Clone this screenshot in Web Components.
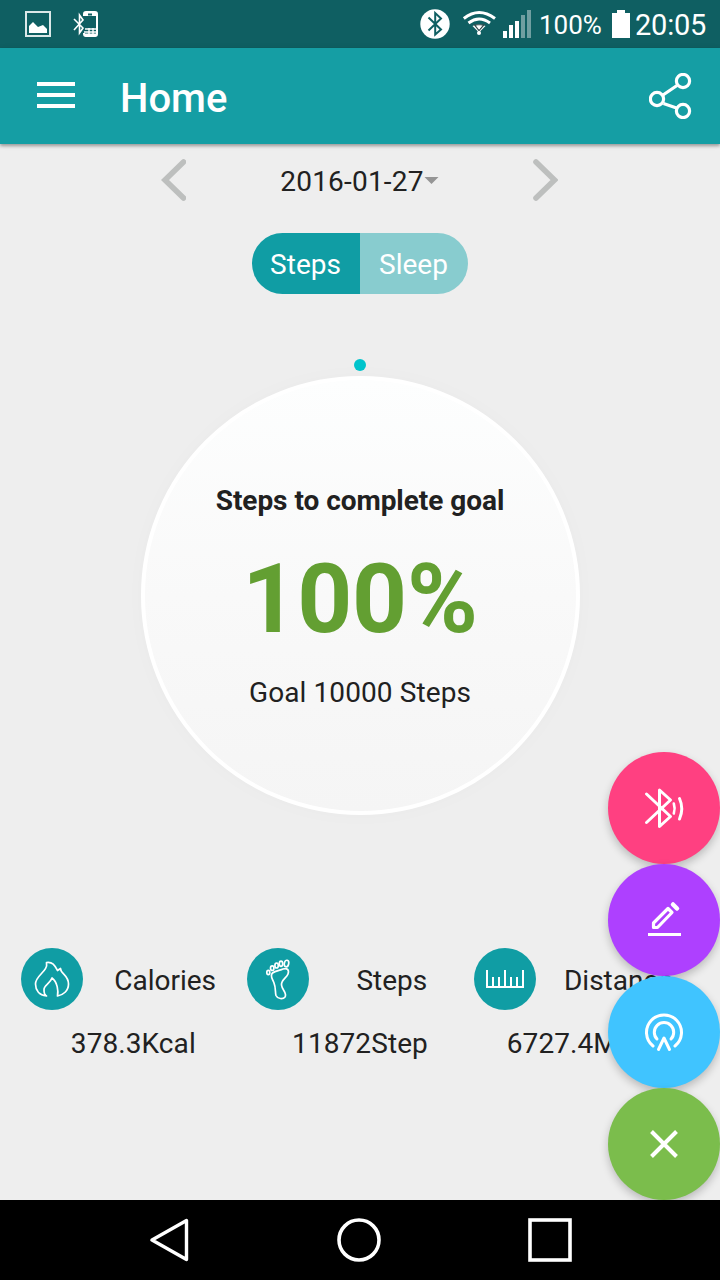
<!DOCTYPE html>
<html lang="en">
<head>
<meta charset="utf-8">
<title>Home</title>
<style>
	body {
		margin: 0;
		background: #eee;
	}
</style>
</head>
<body>
<fit-app></fit-app>
<script>
class BaseElement extends HTMLElement {
	constructor() {
		super();
		const template = document.createElement('template');
		template.innerHTML = this.constructor.html;
		this.attachShadow({mode: 'open'});
		this.shadowRoot.appendChild(template.content.cloneNode(true));
	}
}

class StatusBar extends BaseElement {
	static html = `
<style>
	:host {
		display: flex;
		justify-content: space-between;
		height: 48px;
		box-sizing: border-box;
		padding: 0 14px 0 25px;
		background: #0f5f62;
		color: #fff;
	}
	.group {
		display: flex;
		align-items: center;
	}
	svg {
		display: block;
	}
	.left {
		gap: 22px;
	}
	.percent {
		font-size: 26px;
		line-height: 48px;
		margin: 2px 0 0 7px;
		width: 73px;
	}
	.clock {
		font-size: 29px;
		line-height: 48px;
		margin: 2px 0 0 5px;
		width: 71px;
		letter-spacing: -.2px;
	}
</style>
<div class="group left">
	<svg width="26" height="26" viewBox="0 0 26 26">
		<rect x="1" y="1" width="24" height="24" fill="none" stroke="#dbe8e8" stroke-width="2"/>
		<path d="M4 22V15L8 11L13 16L18 14L22 18V22Z" fill="#fff"/>
	</svg>
	<svg width="26" height="26" viewBox="0 0 26 26" fill="none" stroke="#fff">
		<path d="M1 8L10 17L6.500 22V4L10 9L1 19" stroke-width="1.600"/>
		<path d="M11 5V3Q11 1 13 1H22Q24 1 24 3V23Q24 25 22 25H13Q11 25 11 23V22" stroke-width="2"/>
		<path d="M11 3.500H24" stroke-width="3"/>
		<path d="M15 3.500H19" stroke="#0f5f62" stroke-width="2"/>
		<path d="M12 18H24M11 21H24M16 17V24M20 17V24" stroke-width="1.400"/>
		<path d="M12 24H23" stroke-width="3"/>
	</svg>
</div>
<div class="group right">
	<svg width="112" height="48" viewBox="420 0 112 48">
		<circle cx="435" cy="24" r="14.700" fill="#fff"/>
		<path d="M428.500 17.500L441 29.500L435.200 34.500V13L441 18.500L428.500 30.500" fill="none" stroke="#0f5f62" stroke-width="2"/>
		<g fill="none" stroke="#fff" stroke-width="3">
			<path d="M463.800 18.500Q479 6.500 495 18.500"/>
			<path d="M468.500 23Q479 15 490 23"/>
		</g>
		<path d="M472.500 26Q479 22.500 485.500 26L479 32.500Z" fill="#fff"/>
		<path d="M474.500 24.800H484L479 30.500Z" fill="none" stroke="#334c4f" stroke-width="1.200"/>
		<path d="M477 25.500H481.500L479.500 29.500Z" fill="#fff"/>
		<circle cx="479" cy="33" r="2" fill="#fff"/>
		<path d="M503 31h4v7h-4zM509 25h4v13h-4zM515 21h4v17h-4z" fill="#fff"/>
		<path d="M521 15h4v23h-4zM527 10h4v28h-4z" fill="#709fa1"/>
	</svg>
	<span class="percent">100%</span>
	<svg width="18" height="28" viewBox="0 0 18 28">
		<path d="M5 0H13V3H18V28H0V3H5Z" fill="#fff"/>
	</svg>
	<span class="clock">20:05</span>
</div>`;
}
customElements.define('status-bar', StatusBar);

class AppBar extends BaseElement {
	static html = `
<style>
	:host {
		display: flex;
		align-items: center;
		height: 96px;
		box-sizing: border-box;
		padding: 0 28px 0 37px;
		background: #159ea4;
		color: #fff;
		box-shadow: 0 2px 3px rgba(0, 0, 0, .3), 0 1px 6px rgba(0, 0, 0, .1);
		position: relative;
	}
	h1 {
		flex: 1;
		margin: 6px 0 0 45px;
		font-size: 40px;
		font-weight: 500;
		line-height: 48px;
	}
	svg {
		display: block;
	}
	.menu {
		margin-top: -2px;
	}
</style>
<svg class="menu" width="38" height="28" viewBox="0 0 38 28"><path d="M0 3H38M0 14H38M0 25H38" stroke="#fff" stroke-width="4"/></svg>
<h1><slot></slot></h1>
<svg width="43" height="46" viewBox="649 73 43 46" fill="none" stroke="#fff" stroke-width="3.200">
	<path d="M663 95L677 85.500M663.500 103.500L676.500 108"/>
	<circle cx="657" cy="99" r="6.600"/>
	<circle cx="683" cy="81" r="6.600"/>
	<circle cx="683" cy="111" r="6.600"/>
</svg>`;
}
customElements.define('app-bar', AppBar);

class DatePicker extends BaseElement {
	static html = `
<style>
	:host {
		display: flex;
		align-items: center;
		justify-content: space-between;
		height: 72px;
		padding: 0 162px 0 161px;
		font-size: 28px;
		letter-spacing: .2px;
	}
	svg {
		display: block;
	}
	.date {
		display: flex;
		align-items: center;
		padding-top: 3px;
	}
</style>
<svg width="25" height="42" viewBox="0 0 25 42"><path d="M22.500 3L4 21L22.500 39" fill="none" stroke="#bdbfbe" stroke-width="5.600" stroke-linecap="round"/></svg>
<div class="date">
	<slot></slot>
	<svg width="15" height="9" viewBox="0 0 15 9"><path d="M.500 0H14.500L7.500 7Z" fill="#959595"/></svg>
</div>
<svg width="25" height="42" viewBox="0 0 25 42"><path d="M3 3L21.500 21L3 39" fill="none" stroke="#bdbfbe" stroke-width="5.600" stroke-linecap="round"/></svg>`;
}
customElements.define('date-picker', DatePicker);

class SegmentSwitch extends BaseElement {
	static html = `
<style>
	:host {
		display: grid;
		grid-template-columns: 1fr 1fr;
		width: 216px;
		height: 61px;
		margin: 17px auto 0;
		border-radius: 30.500px;
		overflow: hidden;
		font-size: 28px;
		line-height: 64px;
		text-align: center;
		color: #fff;
	}
	.on {
		background: #109da4;
	}
	.off {
		background: #88cccf;
	}
	slot {
		margin-right: 1px;
		display: block;
	}
</style>
<div class="on"><slot name="on"></slot></div>
<div class="off"><slot name="off"></slot></div>`;
}
customElements.define('segment-switch', SegmentSwitch);

class GoalDial extends BaseElement {
	static html = `
<style>
	:host {
		display: flex;
		flex-direction: column;
		align-items: center;
		margin-top: 65px;
	}
	.dot {
		width: 12px;
		height: 12px;
		border-radius: 50%;
		background: #00c4cc;
	}
	.dial {
		display: flex;
		flex-direction: column;
		align-items: center;
		width: 439px;
		height: 439px;
		box-sizing: border-box;
		margin-top: 5px;
		border: 4px solid #fff;
		border-radius: 50%;
		background: linear-gradient(#fdfefe, #f9f9f9 50%, #f5f5f5);
		box-shadow: 0 0 14px 6px rgba(0, 0, 0, .012);
	}
	.title {
		margin-top: 104px;
		font-size: 28px;
		font-weight: bold;
		line-height: 34px;
		letter-spacing: -.040px;
	}
	.value {
		margin-top: 25px;
		font-size: 96px;
		font-weight: bold;
		line-height: 112px;
		letter-spacing: -.200px;
		color: #639f32;
	}
	.goal {
		margin-top: 21px;
		font-size: 28px;
		line-height: 34px;
		letter-spacing: .100px;
	}
</style>
<div class="dot"></div>
<div class="dial">
	<div class="title"><slot name="title"></slot></div>
	<div class="value"><slot></slot></div>
	<div class="goal"><slot name="goal"></slot></div>
</div>`;
}
customElements.define('goal-dial', GoalDial);

class StatItem extends BaseElement {
	static html = `
<style>
	:host {
		display: block;
		font-size: 28px;
		text-align: center;
	}
	.head {
		display: flex;
		align-items: center;
	}
	.icon {
		display: grid;
		place-items: center;
		width: 62px;
		height: 62px;
		margin-left: .600px;
		border-radius: 50%;
		background: #109da4;
	}
	.label {
		flex: 1;
		padding: 4px 0 0 1px;
		line-height: 34px;
	}
	.value {
		margin-top: 17px;
		line-height: 34px;
		letter-spacing: .080px;
	}
</style>
<div class="head">
	<div class="icon"><slot name="icon"></slot></div>
	<div class="label"><slot name="label"></slot></div>
</div>
<div class="value"><slot></slot></div>`;
}
customElements.define('stat-item', StatItem);

class FabButton extends BaseElement {
	static html = `
<style>
	:host {
		display: grid;
		place-items: center;
		width: 112px;
		height: 112px;
		border-radius: 50%;
		background: var(--fab-color);
		box-shadow: 0 4px 8px rgba(0, 0, 0, .22);
	}
</style>
<slot></slot>`;
}
customElements.define('fab-button', FabButton);

class NavBar extends BaseElement {
	static html = `
<style>
	:host {
		display: flex;
		align-items: center;
		justify-content: space-between;
		height: 80px;
		padding: 0 148px 0 150px;
		background: #000;
	}
	svg {
		display: block;
	}
</style>
<svg width="39" height="44" viewBox="0 0 39 44"><path d="M36.500 2.500V41.500L2 22Z" fill="none" stroke="#fff" stroke-width="3.400" stroke-linejoin="round"/></svg>
<svg width="44" height="44" viewBox="0 0 44 44"><circle cx="22" cy="22" r="20" fill="none" stroke="#fff" stroke-width="3.600"/></svg>
<svg width="44" height="44" viewBox="0 0 44 44"><rect x="2" y="2" width="40" height="40" fill="none" stroke="#fff" stroke-width="3.600"/></svg>`;
}
customElements.define('nav-bar', NavBar);

class FitApp extends BaseElement {
	static html = `
<style>
	:host {
		display: flex;
		flex-direction: column;
		width: 720px;
		height: 1280px;
		overflow: hidden;
		background: #eee;
		color: #212121;
		font-family: Roboto, "Noto Sans", sans-serif;
	}
	main {
		flex: 1;
		position: relative;
	}
	.stats {
		display: grid;
		grid-template-columns: repeat(3, 1fr);
		margin: 133px 20px 0;
	}
	.fabs {
		position: absolute;
		right: 0;
		bottom: 0;
		display: flex;
		flex-direction: column;
	}
	svg {
		display: block;
		fill: none;
		stroke: #fff;
	}
</style>
<status-bar></status-bar>
<app-bar>Home</app-bar>
<main>
	<date-picker>2016-01-27</date-picker>
	<segment-switch>
		<span slot="on">Steps</span>
		<span slot="off">Sleep</span>
	</segment-switch>
	<goal-dial>
		<span slot="title">Steps to complete goal</span>
		100%
		<span slot="goal">Goal 10000 Steps</span>
	</goal-dial>
	<div class="stats">
		<stat-item>
			<svg slot="icon" width="62" height="62" viewBox="0 0 62 62" stroke-width="1.700" stroke-linejoin="round" stroke-linecap="round">
				<path d="M25.500 48C18 47 14.500 42 14.500 36C14.500 27 27.500 23.500 25.500 14.500C32 13.500 34 18 36.500 22.500L39.500 20.500C39.500 26 47.500 27 47.500 36C47.500 43 42 47 36.500 48C37.500 43 36.500 34 31 30C29 36 22.500 37 23 42C23 45 23.500 47 25.500 48Z"/>
			</svg>
			<span slot="label">Calories</span>
			378.3Kcal
		</stat-item>
		<stat-item>
			<svg slot="icon" width="62" height="62" viewBox="0 0 62 62" stroke-width="1.700">
				<path d="M25.500 25C28.500 22.500 33 22.500 36 21C40 19.500 42.500 22 41 26C39.500 30 34 32 34.500 37C35 42 40.500 45 38 49C36 51.500 30.500 51 29 47.500C28 44 29 40 27 35C25.500 31 22.500 27.500 25.500 25Z"/>
				<ellipse cx="21.300" cy="24.500" rx="1.500" ry="2.100"/>
				<ellipse cx="25.200" cy="20.200" rx="1.700" ry="2.300"/>
				<ellipse cx="29.600" cy="17.500" rx="1.700" ry="2.500"/>
				<ellipse cx="34" cy="15.800" rx="1.700" ry="2.600"/>
				<ellipse cx="39.500" cy="15.500" rx="2.200" ry="3.300" transform="rotate(12 39.500 15.500)"/>
			</svg>
			<span slot="label">Steps</span>
			11872Step
		</stat-item>
		<stat-item>
			<svg slot="icon" width="62" height="62" viewBox="0 0 62 62" stroke-width="2">
				<path d="M13 22V39H49V22M19 38V29M25 38V29M31 38V22M37 38V29M43 38V29"/>
			</svg>
			<span slot="label">Distance</span>
			6727.4Meter
		</stat-item>
	</div>
	<div class="fabs">
		<fab-button style="--fab-color: #ff4081">
			<svg width="112" height="112" viewBox="0 0 112 112" stroke-width="3" stroke-linecap="round" stroke-linejoin="round">
				<path d="M38.500 42L62.500 64.500L51.500 74.500V38L62.500 48L38.500 70.500"/>
				<path d="M65.800 51.500Q67.500 56.500 65.800 61.500" stroke-width="2.600"/>
				<path d="M71.500 46.500Q76 56.500 71.500 67"/>
			</svg>
		</fab-button>
		<fab-button style="--fab-color: #ae40ff">
			<svg width="112" height="112" viewBox="0 0 112 112">
				<path d="M45.500 63.500V59L60 44.500L64 48.500L49.500 63.500Z" stroke-width="3.200" stroke-linejoin="round"/>
				<path d="M65 40.500L69 44.500" stroke-width="4.500" stroke-linecap="round"/>
				<path d="M40 70.500H73" stroke-width="3"/>
			</svg>
		</fab-button>
		<fab-button style="--fab-color: #40c4ff">
			<svg width="112" height="112" viewBox="0 0 112 112" stroke-width="3" stroke-linecap="round" stroke-linejoin="round">
				<path d="M45 70A17.500 17.500 0 1 1 67 70"/>
				<path d="M49 63A9.700 9.700 0 1 1 63 63"/>
				<path d="M50.500 73.500L56 62L61.500 73.500"/>
			</svg>
		</fab-button>
		<fab-button style="--fab-color: #7bbd4c">
			<svg width="112" height="112" viewBox="0 0 112 112" stroke-width="4">
				<path d="M43.500 43.500L68.500 68.500M68.500 43.500L43.500 68.500"/>
			</svg>
		</fab-button>
	</div>
</main>
<nav-bar></nav-bar>`;
}
customElements.define('fit-app', FitApp);
</script>
</body>
</html>
